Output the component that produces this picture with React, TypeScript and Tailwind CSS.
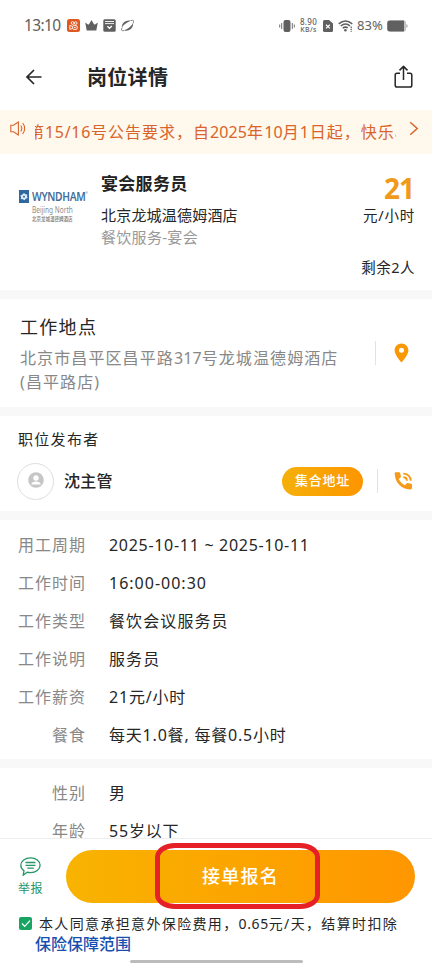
import type { ReactNode } from "react";

interface DetailRowProps {
  label: string;
  value: string;
  valueClassName?: string;
}

const schedule: DetailRowProps[] = [
  {
    label: "用工周期",
    value: "2025-10-11 ~ 2025-10-11",
    valueClassName: "tracking-[0.7px]",
  },
  {
    label: "工作时间",
    value: "16:00-00:30",
    valueClassName: "tracking-[1px]",
  },
  { label: "工作类型", value: "餐饮会议服务员", valueClassName: "tracking-[1.1px]" },
  { label: "工作说明", value: "服务员", valueClassName: "tracking-[1.1px]" },
  { label: "工作薪资", value: "21元/小时" },
  { label: "餐食", value: "每天1.0餐, 每餐0.5小时" },
];

const requirements: DetailRowProps[] = [
  { label: "性别", value: "男" },
  { label: "年龄", value: "55岁以下" },
];

function DetailRow({
  label,
  value,
  valueClassName = "tracking-[0.8px]",
}: Readonly<DetailRowProps>) {
  return (
    <div className="flex h-[38px] items-center text-[16px] whitespace-nowrap">
      <span className="w-[86px] text-right tracking-[1px] text-[#888888]">
        {label}
      </span>
      <span className={`ml-[23px] text-[#262626] ${valueClassName}`}>
        {value}
      </span>
    </div>
  );
}

function Section({
  className,
  children,
}: Readonly<{ className: string; children: ReactNode }>) {
  return (
    <section className={`mb-[9px] shrink-0 bg-white ${className}`}>
      {children}
    </section>
  );
}

function StatusBar() {
  return (
    <div className="flex h-[50px] shrink-0 items-center pt-[1px] pl-6 text-[#606060]">
      <span className="w-[37px] text-[15.5px] tracking-[-0.6px]">13:10</span>
      <svg className="ml-[6px] h-[13px] w-[13px]" viewBox="0 0 13 13" fill="none">
        <rect width="13" height="13" rx="2.5" fill="#df5820" />
        <g stroke="#fff" strokeWidth="0.9">
          <circle cx="5.6" cy="4" r="1.4" />
          <circle cx="8.7" cy="4.1" r="1.3" />
          <rect x="5.6" y="6.6" width="4.6" height="3.8" rx="1.2" />
          <path d="M5.4 7.3 2.8 6.5v3.8l2.6-.8M7.1 8.5h1.6" />
        </g>
      </svg>
      <svg className="ml-[5px] h-[13px] w-[13px]" viewBox="0 0 13 13" fill="currentColor">
        <path d="M.2 3.4 3.3 5.8 4.5 4.6 6.5 1l2 3.6 1.2 1.2 3.1-2.4-1.5 8.1H1.7Z" />
      </svg>
      <svg className="ml-[5px] h-[13px] w-[13px]" viewBox="0 0 13 13" fill="none">
        <rect x="0.3" y="0.3" width="12.4" height="12.4" rx="1.5" fill="currentColor" />
        <path d="M2 2.5h9M2 4.6h9" stroke="#fff" strokeWidth="0.9" />
        <path d="m4.4 7.2 2.1 2.1 2.3-2.4" stroke="#fff" strokeWidth="1.4" />
      </svg>
      <svg className="ml-[5px] h-[13px] w-[13px]" viewBox="0 0 13 13" fill="none">
        <path
          d="M.9 8.3C.5 3.6 5.3.4 10.2 1.7 6.7 2.8 3.2 5.1.9 8.3ZM12 4.5c.6 4.9-4.500 8.100-9.100 6.900C6.500 10.200 9.800 7.900 12 4.500Z"
          fill="currentColor"
        />
        <path d="M1.3 8.5C-.3 11 .6 12.500 3 11.400M10 1.700c2.500-1.200 3.600.4 1.900 2.900" stroke="currentColor" strokeWidth="0.8" />
      </svg>
      <svg className="ml-[145px] h-[14px] w-[16px]" viewBox="0 0 16 14" fill="none">
        <rect x="4.5" y="1" width="7" height="12" rx="2" fill="currentColor" />
        <path d="M2.7 4v6M13.3 4v6M.7 5.500v3M15.300 5.500v3" stroke="currentColor" strokeWidth="0.9" />
      </svg>
      <div className="ml-1 flex w-[19px] flex-col items-center text-[8px] leading-[8px] font-medium tracking-[0.3px] whitespace-nowrap">
        <span>8.90</span>
        <span className="text-[7px]">KB/s</span>
      </div>
      <svg className="ml-[5px] h-[12px] w-[10px]" viewBox="0 0 10 12" fill="none">
        <path d="M1.5 0H6l4 3.4v7.1q0 1.500-1.500 1.500h-7Q0 12 0 10.500V1.500Q0 0 1.500 0Z" fill="currentColor" />
        <path d="m3 4.800 3.800 3.600M6.800 4.800 3 8.400" stroke="#fff" strokeWidth="1.2" />
      </svg>
      <svg className="ml-[5px] h-[12px] w-[15px]" viewBox="0 0 15 12" fill="none">
        <path
          d="M.7 3.800Q7.500-1.700 14.300 3.800M2.700 6Q7.500 2.200 12 5.800M4.700 8.200Q7.500 6.200 9.800 7.900"
          stroke="currentColor"
          strokeWidth="1.5"
        />
        <circle cx="7.4" cy="10.3" r="1.3" fill="currentColor" />
        <path d="M13.2 6.500v5.300" stroke="currentColor" strokeWidth="1.3" strokeDasharray="1.5 0.8" />
      </svg>
      <span className="ml-[4px] w-[26px] text-[13px] tracking-[0.1px]">83%</span>
      <svg className="ml-[4px] h-[12px] w-[21px]" viewBox="0 0 21 12">
        <path d="M3 .5h14q2 0 2 2v1.500q2 .3 2 2t-2 2v1.500q0 2-2 2H3Z" fill="#c4c4c4" />
        <path d="M2.500.5H17v11H2.500q-2.300 0-2.300-2.300V2.800Q.2.500 2.500.5Z" fill="currentColor" />
      </svg>
    </div>
  );
}

function Header() {
  return (
    <header className="flex h-[60px] shrink-0 items-center pr-[19px] pb-[6px] pl-[25px] text-[#262626]">
      <svg className="h-[18px] w-[18px]" viewBox="0 0 18 18" fill="none" stroke="currentColor" strokeWidth="1.7">
        <path d="M16.5 9H2M9 2 2 9l7 7" />
      </svg>
      <h1 className="mt-[2px] ml-[44px] text-[20px] font-bold tracking-[0.3px]">岗位详情</h1>
      <svg
        className="ml-auto h-[24px] w-[19px]"
        viewBox="0 0 19 24"
        fill="none"
        stroke="currentColor"
        strokeWidth="1.5"
        strokeLinejoin="round"
      >
        <path d="M6 8.200H3Q1.200 8.200 1.200 10v10.200Q1.200 22 3 22h13q1.800 0 1.800-1.800V10q0-1.800-1.800-1.800h-3M9.500 15V1.800M5.500 5.400l4-4 4 4" />
      </svg>
    </header>
  );
}

function Notice() {
  return (
    <div className="flex h-[44px] shrink-0 items-center bg-[#fff8ec] pl-[10px] text-[#d9642b]">
      <svg className="mb-[8px] h-[15px] w-[16px]" viewBox="0 0 16 15" fill="none" stroke="currentColor" strokeWidth="1.1">
        <path d="M.8 4.300v6.400h2.700L8.400 14V1L3.500 4.300ZM10.700 4.500q2.200 3 0 6M12.700 2q4 5.500 0 11" />
      </svg>
      <div className="ml-[9px] flex w-[361px] overflow-hidden text-[16px] leading-[24px] whitespace-nowrap">
        <p className="-ml-[7px] tracking-[1px]">
          第<span className="tracking-[0.7px]">15/16</span>号公告要求，自
          <span className="tracking-[0.1px]">2025</span>年
          <span className="tracking-[0.1px]">10</span>月1日起，快乐心
        </p>
      </div>
      <svg className="mb-[8px] ml-[13px] h-[15px] w-[10px]" viewBox="0 0 10 15" fill="none" stroke="currentColor" strokeWidth="1.5">
        <path d="m1.200 1.300 7 6.200-7 6.200" />
      </svg>
    </div>
  );
}

function HotelLogo() {
  return (
    <div className="mt-[35px] flex h-[40px] w-[68px] shrink-0 gap-[3px]">
      <svg className="mt-[1px] h-[13px] w-[10px] shrink-0" viewBox="0 0 10 14" preserveAspectRatio="none">
        <rect width="10" height="14" fill="#2f689f" />
        <path
          d="m5 3.200 1.400 1.300 2 .3-.4 2 .7 1.800-1.900.8L5.500 11l-1.700-1.100-2-.1.300-2-.8-1.800 1.800-.9Z"
          fill="#dce9f4"
        />
        <circle cx="5" cy="7.2" r="1" fill="#2f689f" />
      </svg>
      <div className="origin-left scale-x-[0.82] whitespace-nowrap">
        <div className="flex h-[15px] text-[12.5px] leading-[15px] font-semibold tracking-[-0.4px] text-[#3f6f9b]">
          WYNDHAM<span className="mt-[2px] text-[3px] leading-[4px]">®</span>
        </div>
        <div className="mt-[1px] text-[8px] leading-[10px] text-[#8b8f93]">Beijing North</div>
        <div className="text-[5.5px] leading-[8px] font-medium text-[#777777]">
          北京龙城温德姆酒店
        </div>
      </div>
    </div>
  );
}

function JobSummary() {
  return (
    <Section className="flex h-[136px] pr-[17px] pl-[19px]">
      <HotelLogo />
      <div className="ml-[14px] whitespace-nowrap">
        <h2 className="mt-[18px] text-[17px] leading-[24px] font-bold tracking-[0.3px] text-[#222222]">
          宴会服务员
        </h2>
        <p className="mt-[8px] text-[15px] leading-[22px] tracking-[0.2px] text-[#262626]">
          北京龙城温德姆酒店
        </p>
        <p className="text-[15px] leading-[22px] tracking-[0.3px] text-[#999999]">
          餐饮服务-宴会
        </p>
      </div>
      <div className="ml-auto flex flex-col items-end whitespace-nowrap text-[#262626]">
        <strong className="mt-[18px] mr-[1px] text-[28px] leading-[32px] font-bold tracking-[-1px] text-[#ef9a1a]">
          21
        </strong>
        <span className="text-[14.5px] leading-[22px] tracking-[0.8px]">元/小时</span>
        <span className="mt-[30px] text-[14.5px] leading-[22px] tracking-[0.5px]">剩余2人</span>
      </div>
    </Section>
  );
}

function Location() {
  return (
    <Section className="flex h-[108px] items-center pr-[23px] pl-5">
      <div className="w-[330px] whitespace-nowrap">
        <h2 className="text-[18px] leading-[28px] tracking-[1.3px] text-[#262626]">工作地点</h2>
        <p className="mt-[5px] text-[16px] leading-[24px] tracking-[1.1px] text-[#888888]">
          北京市昌平区昌平路
          <span className="tracking-[0.1px]">317</span>
          号龙城温德姆酒店
          <br />
          (昌平路店)
        </p>
      </div>
      <div className="ml-[25px] h-[24px] w-px bg-[#e2e2e2]" />
      <svg className="ml-auto h-[20px] w-[15px]" viewBox="0 0 15 20">
        <path
          d="M7.500.5C3.600.5.600 3.500.600 7.300c0 5 6.900 12.200 6.900 12.200s6.900-7.200 6.900-12.200C14.400 3.500 11.400.5 7.500.5Zm0 9.300a2.500 2.500 0 1 1 0-5 2.500 2.500 0 0 1 0 5Z"
          fill="#f99705"
        />
      </svg>
    </Section>
  );
}

function Publisher() {
  return (
    <Section className="h-[95px] pt-[11px] pr-[19px] pl-[17px] text-[#262626]">
      <h2 className="ml-[1px] text-[15px] leading-[24px] tracking-[1.3px]">职位发布者</h2>
      <div className="mt-[12px] flex h-[36px] items-center">
        <div className="flex h-[37px] w-[37px] shrink-0 items-center justify-center rounded-full border border-[#dedede]">
          <svg className="mb-[3px] h-[16px] w-[16px]" viewBox="0 0 16 16">
            <circle cx="8" cy="8" r="7.8" fill="#c6c6c6" />
            <circle cx="8" cy="6" r="2.7" fill="#fff" />
            <path d="M3.2 12.500c.3-3.900 9.300-3.900 9.600 0Z" fill="#fff" />
          </svg>
        </div>
        <span className="ml-[10px] text-[16px] font-medium tracking-[0.2px]">沈主管</span>
        <button className="ml-auto h-[29px] w-[81px] rounded-full bg-linear-to-r from-[#f5b00a] to-[#fd9500] text-[13px] font-medium tracking-[0.7px] text-white">
          集合地址
        </button>
        <div className="ml-[14px] h-[24px] w-px bg-[#e2e2e2]" />
        <svg className="ml-[16px] h-[18px] w-[19px]" viewBox="0 0 19 18" fill="none" stroke="#f59b18">
          <path
            d="M1.700.3h3.500q.8 0 1 .8l.7 3.300q.1.700-.4 1.200L4.700 7.300q2.200 4.100 6.100 6l1.800-1.900q.5-.4 1.100-.3l3.500.7q.8.200.8 1v3.300q0 1.300-1.300 1.300C8.300 17.900.7 10.800.7 1.300.7.700 1.100.3 1.700.3Z"
            fill="#f59b18"
            stroke="none"
          />
          <path d="M9.300 1.600c4.200 0 7.500 3.100 7.500 7.200M9.300 5.300c2.100 0 3.600 1.500 3.600 3.500" strokeWidth="1.9" />
        </svg>
      </div>
    </Section>
  );
}

function Footer() {
  return (
    <footer className="h-[126px] shrink-0 border-t border-[#eeeeee] bg-white">
      <div className="flex h-[74px] items-center pr-[17px] pl-[18px]">
        <div className="flex w-[25px] flex-col items-center whitespace-nowrap text-[#269568]">
          <svg className="mt-[1px] h-[19px] w-[21px]" viewBox="0 0 21 19" fill="none" stroke="currentColor" strokeWidth="1.3">
            <path d="M10.500.8c5.300 0 9.600 3.200 9.600 7.400s-4.300 7.500-9.600 7.500c-1.200 0-2.300-.1-3.300-.5l-4 3 .8-4.500C2 12.300.8 10.400.8 8.200.8 4 5.200.8 10.500.8Z" />
            <path d="M5.500 5.500h10M5.500 8.300h10M7.300 11.100h6.500" />
          </svg>
          <span className="mt-[4px] text-[12px] leading-[17px] tracking-[0.5px]">举报</span>
        </div>
        <div className="relative ml-[23px] h-[53px] w-[349px]">
          <button className="h-full w-full rounded-full bg-linear-to-r from-[#f8b300] to-[#ff9600] text-[18px] font-medium tracking-[1.3px] text-white">
            接单报名
          </button>
          <div className="pointer-events-none absolute -top-[7px] left-[89px] h-[66px] w-[165px] rounded-[20px/14px] border-[5px] border-[#e62027]" />
        </div>
      </div>
      <div className="pl-[19px] whitespace-nowrap">
        <div className="flex h-[20px] items-center">
          <span className="flex h-[13px] w-[13px] items-center justify-center rounded-[2px] bg-[#18a463]">
            <svg className="h-[9px] w-[10px]" viewBox="0 0 10 9" fill="none" stroke="#fff" strokeWidth="1.2">
              <path d="m1 4.500 2.700 2.900L9 1.600" />
            </svg>
          </span>
          <span className="ml-[7px] text-[14px] tracking-[1.35px] text-[#262626]">
            本人同意承担意外保险费用，<span className="tracking-[0.6px]">0.65</span>元/天，结算时扣除
          </span>
        </div>
        <a className="ml-[16px] block text-[16px] leading-[22px] font-medium text-[#164fb0]">
          保险保障范围
        </a>
      </div>
      <div className="mx-auto mt-[5px] h-[3px] w-[173px] rounded-full bg-[#bcbcbc]" />
    </footer>
  );
}

function App() {
  return (
    <main
      lang="zh-CN"
      className="flex h-[964px] w-[432px] flex-col overflow-hidden bg-white font-['Noto_Sans','Noto_Sans_CJK_SC',sans-serif]"
    >
      <StatusBar />
      <Header />
      <Notice />
      <div className="flex min-h-0 flex-1 flex-col overflow-hidden bg-[#f8f8f8]">
        <JobSummary />
        <Location />
        <Publisher />
        <Section className="h-[239px] pt-[6px]">
          {schedule.map((row) => (
            <DetailRow key={row.label} {...row} />
          ))}
        </Section>
        <Section className="h-[90px] pt-[6px]">
          {requirements.map((row) => (
            <DetailRow key={row.label} {...row} />
          ))}
        </Section>
      </div>
      <Footer />
    </main>
  );
}

export default App;
